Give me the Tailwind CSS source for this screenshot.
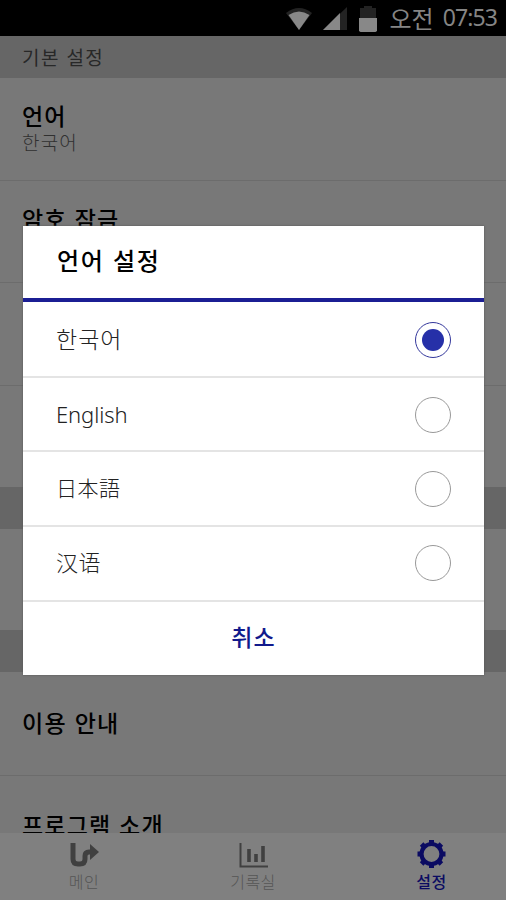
<!DOCTYPE html>
<html lang="ko">
<head>
<meta charset="utf-8">
<title>설정</title>
<script src="https://cdn.jsdelivr.net/npm/@tailwindcss/browser@4"></script>
</head>
<body class="w-[506px] h-[900px] overflow-hidden bg-[#787878] font-['Noto_Sans_CJK_KR',sans-serif]">
<div class="relative w-[506px] h-[900px] flex flex-col overflow-hidden">
  <header class="h-9 shrink-0 bg-black flex items-center justify-end pr-[9px] text-[#858585]">
    <svg class="w-[26px] h-6 mr-[11px] mt-[2px]" viewBox="0 0 26 24"><path d="M0 6Q13-4 26 6L13 23Z" fill="#232323"/><path d="M2.500 8Q13 1 23.500 8L13 23Z" fill="#888"/></svg>
    <svg class="w-6 h-6 mr-3 mt-[2px]" viewBox="0 0 24 24"><path d="M24 0V23H0Z" fill="#232323"/><path d="M17 6V23H0Z" fill="#888"/></svg>
    <svg class="w-[18px] h-7 mr-[13px] mt-[2px]" viewBox="0 0 18 28"><path d="M1 3H5V1H13V3H17V14H1Z" fill="#232323"/><path d="M0 13H18V26L16.500 27H1.500L0 26Z" fill="#888"/></svg>
    <span class="flex gap-[9px] leading-none"><span class="text-[24px]">오전</span><span class="text-[23px] font-['Noto_Sans',sans-serif] tracking-[-0.9px]">07:53</span></span>
  </header>
  <main class="flex-1 min-h-0 overflow-hidden text-black">
    <h2 class="h-[42px] bg-[#666] pl-[22px] text-[19px] leading-[41px] tracking-[1.4px] text-[#282828] font-normal">기본 설정</h2>
    <div class="h-[103px] border-b border-[#6c6c6c] pl-[22px] pt-[24px]">
      <p class="text-[23px] leading-[26px] font-medium tracking-[1.2px]">언어</p>
      <p class="text-[19px] leading-[27px] font-light tracking-[1.2px] text-[#303030]">한국어</p>
    </div>
    <div class="h-[102px] border-b border-[#6c6c6c] pl-[22px] pt-[24px] text-[23px] leading-[26px] font-medium tracking-[1.3px]">암호 잠금</div>
    <div class="h-[103px] border-b border-[#6c6c6c]"></div>
    <div class="h-[101px]"></div>
    <div class="h-[42px] bg-[#666]"></div>
    <div class="h-[101px]"></div>
    <div class="h-[42px] bg-[#666]"></div>
    <div class="h-[104px] border-b border-[#6c6c6c] pl-[22px] text-[23px] leading-[101px] font-medium tracking-[1.3px]">이용 안내</div>
    <div class="pl-[22px] text-[23px] pt-[35px] leading-[26px] font-medium tracking-[1.2px]">프로그램 소개</div>
  </main>
  <nav class="h-[67px] shrink-0 bg-[#808080] grid grid-cols-[168px_170px_168px] text-[16px] leading-5 tracking-[0.5px] text-[#555] text-center">
    <div class="flex flex-col items-center pt-[10px] gap-[4px] font-light">
      <svg class="w-[29px] h-6" viewBox="0 0 29 24"><path d="M3 0V16Q3 21 8 21H10Q15 21 15 16V13Q15 9 19 9H22" fill="none" stroke="#404040" stroke-width="5"/><path d="M20 1L29 9L20 17Z" fill="#404040"/></svg>
      <span>메인</span>
    </div>
    <div class="flex flex-col items-center pt-[9px] gap-[5px] font-light">
      <svg class="w-[29px] h-[26px] -mb-[2px]" viewBox="0 0 29 26" fill="none" stroke="#404040"><path d="M1.500 1V24.500H29" stroke-width="2"/><path d="M10 7V20M17 12V20M24 4V20" stroke-width="3.600"/></svg>
      <span>기록실</span>
    </div>
    <div class="flex flex-col items-center pt-[7px] pl-[19px] gap-[3px] text-[#0b0b62] font-medium">
      <svg class="w-[29px] h-7" viewBox="-14.500 -14 29 28" fill="none" stroke="#0b0b62"><circle r="10" stroke-width="4.200"/><path d="M0-14V-10M0 10V14M-14 0H-10M10 0H14M-9.900-9.900L-7.100-7.100M9.900 9.900L7.100 7.100M9.900-9.900L7.100-7.100M-9.900 9.900L-7.100 7.100" stroke-width="5"/></svg>
      <span>설정</span>
    </div>
  </nav>

  <section role="dialog" class="absolute left-[23px] top-[226px] w-[461px] h-[449px] bg-white flex flex-col text-[23px] tracking-[1px] text-[#222] shadow-[0_0_2px_#555]">
    <h1 class="h-[76px] border-b-4 border-[#1b1e94] pl-[34px] leading-[67px] text-[24px] tracking-[1.7px] font-medium text-black">언어 설정</h1>
    <div class="h-[76px] border-b-2 border-[#e4e4e4] px-[33px] pt-[2px] flex items-center justify-between font-light"><span class="-mt-[4px]">한국어</span><i class="size-9 rounded-full border-[1.5px] border-[#34389c] flex items-center justify-center"><b class="size-[22px] rounded-full bg-[#2630a8]"></b></i></div>
    <div class="h-[74px] border-b-2 border-[#e4e4e4] px-[33px] pt-px flex items-center justify-between"><span class="font-['Noto_Sans',sans-serif] text-[22px] font-light tracking-[-0.1px]">English</span><i class="size-9 rounded-full border border-[#999]"></i></div>
    <div class="h-[75px] border-b-2 border-[#e4e4e4] px-[33px] flex items-center justify-between font-light" lang="ja"><span class="-mt-[2px] font-['Noto_Sans_CJK_JP',sans-serif] text-[21px] tracking-[0.5px]">日本語</span><i class="size-9 rounded-full border border-[#999]"></i></div>
    <div class="h-[75px] border-b-2 border-[#e4e4e4] px-[33px] pb-[2px] flex items-center justify-between font-light" lang="zh"><span class="-mt-[2px] font-['Noto_Sans_CJK_SC',sans-serif] text-[22px] tracking-[0.5px]">汉语</span><i class="size-9 rounded-full border border-[#999]"></i></div>
    <button class="h-[73px] leading-[69px] pb-1 text-center font-medium text-[#111a8c]">취소</button>
  </section>
</div>
</body>
</html>
